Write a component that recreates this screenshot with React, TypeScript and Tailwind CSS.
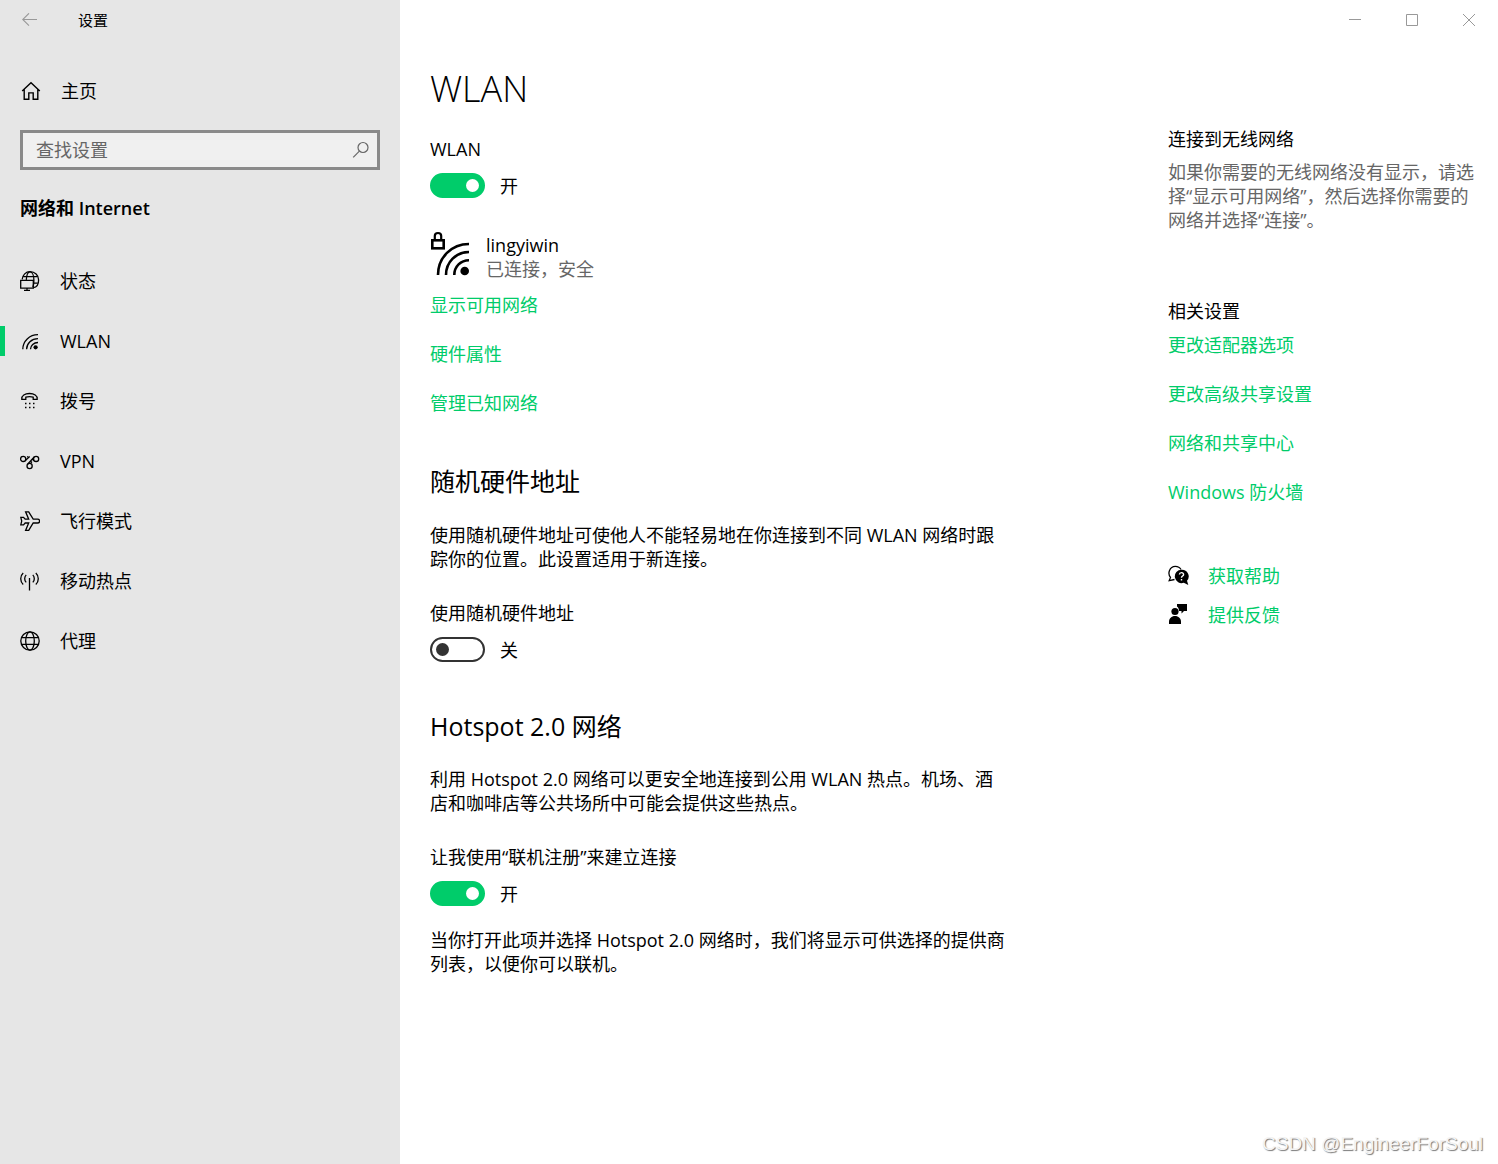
import { ReactNode } from 'react';

interface NavItem {
  id: string;
  label: string;
  icon: ReactNode;
}

const iconProps = {
  fill: 'none',
  stroke: 'currentColor',
  'aria-hidden': true
};

function BackIcon() {
  return (
    <svg {...iconProps} width="16" height="14" viewBox="0 0 16 14" strokeWidth="1.1">
      <path d="M15 6.500H.8M7 .3.700 6.500 7 12.700" />
    </svg>
  );
}

function HomeIcon() {
  return (
    <svg {...iconProps} width="20" height="20" viewBox="0 0 20 20" strokeWidth="1.4">
      <path d="M1.2 10 10 1.8l8.8 8.2M3.2 8.3v9.9h4.6v-6.3h4.4v6.3h4.6V8.3" />
    </svg>
  );
}

function SearchIcon() {
  return (
    <svg {...iconProps} width="18" height="18" viewBox="0 0 18 18" strokeWidth="1.2">
      <circle cx="11" cy="6.5" r="5" />
      <path d="M7.4 10.1 1.2 16.3" />
    </svg>
  );
}

function StatusIcon() {
  return (
    <svg {...iconProps} width="20" height="20" viewBox="0 0 20 20" strokeWidth="1.3">
      <path d="M2.2 8.4C2.600 3.900 5.800.7 10 .7c4.900 0 8.600 3.600 8.600 8.200 0 4.300-2.200 7.300-5.300 7.800" />
      <path d="M3 5.600h14.600M14 12.200h3.900M6.300 8.900C6.600 4 8.200.9 10 .9c2.400 0 3.900 3.900 3.900 8.400 0 3-.4 5.200-1 6.900" />
      <path d="M.7 9.3h12.600v7.900H.7zM7 17.200v2.200M4 19.300h6" />
    </svg>
  );
}

function WlanIcon() {
  return (
    <svg {...iconProps} width="20" height="20" viewBox="0 0 20 20" strokeWidth="1.3">
      <path d="M2.8 18.3C2.8 10.200 9.500 3.700 18 3.700M6.600 18.300c0-5.800 5-10.600 11.400-10.600M10.500 18.300c0-3.800 3.300-6.800 7.500-6.800" />
      <circle cx="15.600" cy="16.300" r="2.100" fill="currentColor" stroke="none" />
    </svg>
  );
}

function DialIcon() {
  return (
    <svg {...iconProps} width="20" height="20" viewBox="0 0 20 20" strokeWidth="1.3">
      <path d="M1.8 8.300C1.300 4.500 5 2.500 9.500 2.500s8.200 2 7.700 5.800h-4V6.200c-2.500-.7-4.900-.7-7.400 0v2.100z" />
      <path d="M5 12.500h9.500M5 16.500h9.500" strokeWidth="1.500" strokeDasharray="1.500 2.500" />
    </svg>
  );
}

function VpnIcon() {
  return (
    <svg {...iconProps} width="20" height="20" viewBox="0 0 20 20" strokeWidth="1.300">
      <circle cx="3.200" cy="7.900" r="2.600" />
      <circle cx="16.100" cy="7.900" r="2.600" />
      <circle cx="9.600" cy="15" r="2.600" />
      <path d="M14.200 6 7.800 13M5.100 9.700 9.700 5.600M7.200 5.400l1.600 1.500M10.900 11.800l1-1.300M14.200 9.600l-1.400-1.200" />
    </svg>
  );
}

function PlaneIcon() {
  return (
    <svg {...iconProps} width="20" height="20" viewBox="0 0 20 20" strokeWidth="1.300">
      <path d="M.8 6.300h2.700l1.700 1.900h3.500L5.600.8h3.100l4.500 7.400h4.300c2.800 0 2.800 3.800 0 3.800h-4.300l-4.500 7.400H5.600l3.100-7.400H5.200l-1.700 1.900H.8l.9-3.800z" />
    </svg>
  );
}

function HotspotIcon() {
  return (
    <svg {...iconProps} width="20" height="20" viewBox="0 0 20 20" strokeWidth="1.300">
      <path d="M9.500 7v12.500" />
      <path d="M3.200 1.900c-3.300 3-3.300 8.500 0 11.500M6.200 3.900c-2 2-2 5.500 0 7.500M15.800 1.900c3.300 3 3.300 8.500 0 11.500M12.800 3.900c2 2 2 5.500 0 7.500" />
    </svg>
  );
}

function GlobeIcon() {
  return (
    <svg {...iconProps} width="20" height="20" viewBox="0 0 20 20" strokeWidth="1.300">
      <circle cx="10" cy="10" r="9.200" />
      <ellipse cx="10" cy="10" rx="4.300" ry="9.200" />
      <path d="M1.500 6.700h17M1.500 13.300h17" />
    </svg>
  );
}

function SecureWifiIcon() {
  return (
    <svg {...iconProps} width="40" height="46" viewBox="0 0 40 46" strokeWidth="2.600">
      <rect x="2.300" y="9.300" width="11.400" height="8" />
      <path d="M4.800 9V5c0-4 6.400-4 6.400 0v4" strokeWidth="2.200" />
      <path d="M8 44c0-17.500 13.500-31 31-31M16 44c0-13 10-23 23-23M24.300 44c0-8.500 6.500-14.800 14.700-14.800" />
      <circle cx="34.700" cy="40" r="4.300" fill="currentColor" stroke="none" />
    </svg>
  );
}

function HelpIcon() {
  return (
    <svg {...iconProps} width="21" height="22" viewBox="0 0 21 22" strokeWidth="1.300">
      <path d="M6.500 14.500 1.200 15.600l1.300-3.200C-.8 8.500 1.600 1.300 7.300 1.300c2.700 0 4.700 1.300 5.700 3.200" />
      <path
        d="M13.500 4.700a6.700 6.700 0 1 0 2.300 13l4.500 2.300-1.300-4.200a6.700 6.700 0 0 0-5.500-11.100z"
        fill="currentColor"
        stroke="none"
      />
      <path d="M11.400 9.500c.2-2.600 4.400-2.400 4.200.1-.1 1.500-2.100 1.500-2.100 3.200M13.500 14v1.500" stroke="#fff" strokeWidth="1.400" />
    </svg>
  );
}

function FeedbackIcon() {
  return (
    <svg width="20" height="22" viewBox="0 0 20 22" fill="currentColor" aria-hidden="true">
      <path d="M9 0h10v7h-3l-2.500 2.500V7H11c0-2-.6-3.500-2-4.500z" />
      <circle cx="7" cy="7.500" r="3.600" />
      <path d="M1 20v-2.500C1 14.500 3.500 12 7 12s6 2.500 6 5.500V20z" />
    </svg>
  );
}

const navItems: NavItem[] = [
  { id: 'status', label: '状态', icon: <StatusIcon /> },
  { id: 'wlan', label: 'WLAN', icon: <WlanIcon /> },
  { id: 'dial', label: '拨号', icon: <DialIcon /> },
  { id: 'vpn', label: 'VPN', icon: <VpnIcon /> },
  { id: 'airplane', label: '飞行模式', icon: <PlaneIcon /> },
  { id: 'hotspot', label: '移动热点', icon: <HotspotIcon /> },
  { id: 'proxy', label: '代理', icon: <GlobeIcon /> }
];

const networkLinks = ['显示可用网络', '硬件属性', '管理已知网络'];
const relatedLinks = ['更改适配器选项', '更改高级共享设置', '网络和共享中心', 'Windows 防火墙'];

function Toggle({ id, label, on = false }: { id: string; label: string; on?: boolean }) {
  return (
    <div>
      <label htmlFor={id} className="block">{label}</label>
      <div className="mt-3 flex h-[25px] items-center gap-[15px]">
        <input
          id={id}
          type="checkbox"
          role="switch"
          defaultChecked={on}
          className="flex h-[25px] w-[55px] shrink-0 appearance-none items-center rounded-full border-2 border-[#333] px-1 before:size-[13px] before:rounded-full before:bg-[#333] checked:justify-end checked:border-[#00cc6a] checked:bg-[#00cc6a] checked:before:bg-white"
        />
        <span>{on ? '开' : '关'}</span>
      </div>
    </div>
  );
}

function LinkList({ links }: { links: string[] }) {
  return (
    <ul className="flex flex-col items-start gap-[25px]">
      {links.map((link) => (
        <li key={link}>
          <a href="#" className="block text-[#00cc6a]">{link}</a>
        </li>
      ))}
    </ul>
  );
}

function Sidebar() {
  return (
    <aside className="w-[400px] shrink-0 bg-[#e6e6e6]">
      <header className="flex h-10 items-center pl-[22px]">
        <button aria-label="返回" className="text-[#999]"><BackIcon /></button>
        <span className="ml-10 text-[15px]">设置</span>
      </header>
      <a href="#" className="mt-[31px] flex h-10 items-center gap-5 px-[21px]">
        <HomeIcon />
        主页
      </a>
      <div className="mx-5 mt-[19px] flex h-10 items-center border-3 border-[#8a8a8a] bg-[#f0f0f0] pr-[7px] text-[#666]">
        <input
          type="search"
          aria-label="查找设置"
          placeholder="查找设置"
          className="min-w-0 flex-1 bg-transparent px-[13px] outline-none placeholder:text-[#666]"
        />
        <button aria-label="搜索"><SearchIcon /></button>
      </div>
      <h2 className="mx-5 mt-[26px] font-semibold">网络和 Internet</h2>
      <nav className="mt-[31px]">
        {navItems.map((item) => (
          <a key={item.id} href="#" className="flex h-[60px] items-center">
            <span className={item.id === 'wlan' ? 'h-[30px] w-[5px] bg-[#00cc6a]' : 'h-[30px] w-[5px]'} />
            <span className="mr-5 ml-[15px]">{item.icon}</span>
            {item.label}
          </a>
        ))}
      </nav>
    </aside>
  );
}

function WindowControls() {
  return (
    <div className="flex h-10 justify-end pr-px text-[#999]">
      <button aria-label="最小化" className="flex w-[57px] items-center justify-center">
        <svg {...iconProps} width="12" height="12"><path d="M0 5.500h12" /></svg>
      </button>
      <button aria-label="最大化" className="flex w-[57px] items-center justify-center">
        <svg {...iconProps} width="12" height="12"><path d="M.5.5h11v11H.5z" /></svg>
      </button>
      <button aria-label="关闭" className="flex w-[57px] items-center justify-center">
        <svg {...iconProps} width="12" height="12"><path d="m0 0 12 12M12 0 0 12" /></svg>
      </button>
    </div>
  );
}

function WlanSettings() {
  return (
    <section className="min-w-0 flex-1 pt-[25px]">
      <h1 className="text-[36px] leading-[48px] font-light">WLAN</h1>
      <div className="mt-6">
        <Toggle id="wlan" label="WLAN" on />
      </div>
      <div className="mt-[33px] mb-3 flex items-start gap-4">
        <SecureWifiIcon />
        <div className="pt-0.5">
          <p>lingyiwin</p>
          <p className="text-[#666]">已连接，安全</p>
        </div>
      </div>
      <LinkList links={networkLinks} />

      <h2 className="mt-[50px] text-[25px] leading-8">随机硬件地址</h2>
      <p className="mt-[26px] mb-[30px] whitespace-nowrap">
        使用随机硬件地址可使他人不能轻易地在你连接到不同 WLAN 网络时跟<br />
        踪你的位置。此设置适用于新连接。
      </p>
      <Toggle id="random-address" label="使用随机硬件地址" />

      <h2 className="mt-12 text-[25px] leading-8">Hotspot 2.0 网络</h2>
      <p className="mt-[25px] mb-[30px] whitespace-nowrap">
        利用 Hotspot 2.0 网络可以更安全地连接到公用 WLAN 热点。机场、酒<br />
        店和咖啡店等公共场所中可能会提供这些热点。
      </p>
      <Toggle id="online-signup" label="让我使用“联机注册”来建立连接" on />
      <p className="mt-[22px] whitespace-nowrap">
        当你打开此项并选择 Hotspot 2.0 网络时，我们将显示可供选择的提供商<br />
        列表，以便你可以联机。
      </p>
    </section>
  );
}

function RelatedPanel() {
  return (
    <aside className="w-[330px] shrink-0 pt-[87px]">
      <h3>连接到无线网络</h3>
      <p className="mt-[9px] whitespace-nowrap text-[#666]">
        如果你需要的无线网络没有显示，请选<br />
        择“显示可用网络”，然后选择你需要的<br />
        网络并选择“连接”。
      </p>
      <h3 className="mt-[67px] mb-[10px]">相关设置</h3>
      <LinkList links={relatedLinks} />
      <a href="#" className="mt-[60px] flex items-center gap-5 text-[#00cc6a]">
        <span className="w-5 text-black"><HelpIcon /></span>
        获取帮助
      </a>
      <a href="#" className="mt-[15px] flex items-center gap-5 text-[#00cc6a]">
        <span className="w-5 text-black"><FeedbackIcon /></span>
        提供反馈
      </a>
    </aside>
  );
}

export default function App() {
  return (
    <div className="relative flex min-h-screen bg-white font-['Open_Sans','Noto_Sans_CJK_SC',sans-serif] text-[18px] leading-6 text-black">
      <Sidebar />
      <main className="min-w-0 flex-1">
        <WindowControls />
        <div className="flex pl-[30px]">
          <WlanSettings />
          <RelatedPanel />
        </div>
      </main>
      <span className="absolute right-[15px] bottom-2 font-['Liberation_Sans',sans-serif] text-[19px] text-[#f4f4f4] [text-shadow:1px_1px_1px_#777]">
        CSDN @EngineerForSoul
      </span>
    </div>
  );
}
